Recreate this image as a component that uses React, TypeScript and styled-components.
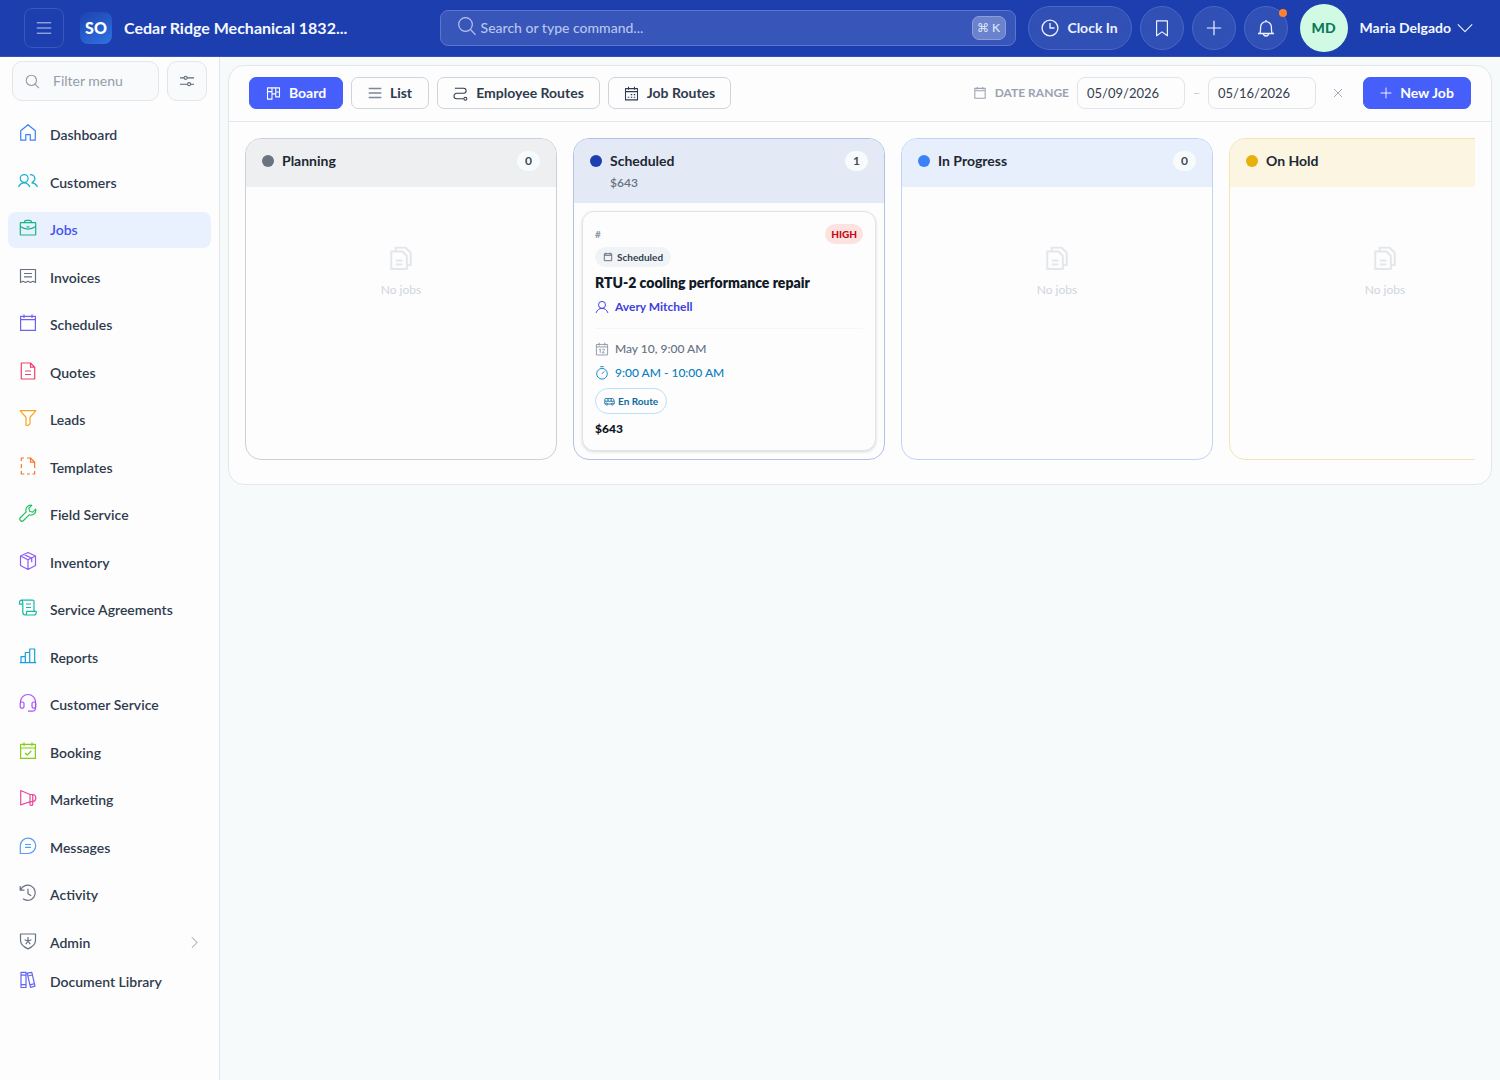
import React from "react";
import styled, { createGlobalStyle } from "styled-components";

const GlobalStyle = createGlobalStyle`
  *, *::before, *::after { box-sizing: border-box; }
  body {
    margin: 0;
    background: #f7fafb;
    color: #2f3b4c;
    font-family: "Lato", "Open Sans", sans-serif;
    font-size: 14px;
    line-height: 20px;
  }
  button, input { font: inherit; color: inherit; }
  button { cursor: pointer; }
  a { color: inherit; text-decoration: none; }
  ul { list-style: none; margin: 0; padding: 0; }
  h1, h2, h3, p { margin: 0; font-size: inherit; font-weight: inherit; }
`;

/* ---------- icons, drawn on a 20 x 20 grid ---------- */

const shapes = {
  menu: <path d="M1 3.5h18M1 10h18M1 16.5h18" />,
  search: (
    <>
      <circle cx="8.5" cy="8.5" r="6.8" />
      <path d="m13.5 13.5 5 5.3" />
    </>
  ),
  sliders: (
    <>
      <path d="M0 5.500h6M10 5.500h10M0 14.500h11M15 14.500h5" />
      <circle cx="8" cy="5.500" r="2.200" />
      <circle cx="13" cy="14.500" r="2.200" />
    </>
  ),
  clock: (
    <>
      <circle cx="10" cy="10" r="8.8" />
      <path d="M10 4.500V10h5" />
    </>
  ),
  bookmark: <path d="M4 2h12v16.500l-6-4.200-6 4.200z" />,
  plus: <path d="M10 1v18M1 10h18" />,
  bell: (
    <path d="M2 15.500h16M3.800 15.500c.8-1.500 .8-3 .8-6.500a5.400 5.400 0 0 1 10.800 0c0 3.500 0 5 .8 6.500M7.500 15.500a2.500 2.500 0 0 0 5 0M10 3.600V2" />
  ),
  chevronDown: <path d="m1 5.500 9 9 9-9" />,
  chevronRight: <path d="m6 2 8 8-8 8" />,
  close: <path d="m2 2 16 16M18 2 2 18" />,
  home: <path d="M2.700 7.800 10 1.700l7.300 6.100v9.400h-5v-5.500H7.800v5.500H2.700z" />,
  people: (
    <>
      <circle cx="6.200" cy="7.500" r="3.900" />
      <path d="M.5 16c1.300-2.800 3.200-4.200 5.700-4.200s4.400 1.400 5.700 4.200M12 3.800a3.900 3.900 0 1 1 1.800 7.600M13.500 11.800c2.700 0 4.700 1.400 6 4.200" />
    </>
  ),
  briefcase: (
    <>
      <rect x="2.300" y="4.600" width="15.400" height="12.400" rx=".5" />
      <path d="M6.500 4.600c0-1.800.6-2.300 2-2.300h3c1.400 0 2 .5 2 2.300M2.300 8.500c4.800 3.200 10.600 3.200 15.400 0M8.600 8.800h2.800" />
    </>
  ),
  receipt: (
    <path d="M2.500 3.500h15v13l-2.500-1.200-2.500 1.200-2.500-1.200-2.500 1.200L5 15.300l-2.500 1.200zM6 7.500h8M6 10.800h8" />
  ),
  calendar: (
    <path d="M2.600 3.400h14.800v14H2.600zM2.600 6.700h14.800M6 1.500v3.600M14 1.500v3.600" />
  ),
  document: (
    <path d="M3.300 2h9.200l4.200 4.200V18H3.300zM12.500 2v4.200h4.200M7 10h6M7 13.500h6" />
  ),
  funnel: (
    <path d="M2.300 2.600h15.400c0 2-5.700 5-5.700 7.400v5.300c0 1.300-3.300 3-4 1.700V10C8 7.600 2.300 4.600 2.300 2.600z" />
  ),
  dashedDocument: (
    <>
      <path d="M6 2H3.300v3M3.300 8v4M3.300 15v3h3M9 18h3M14.500 18h2.200v-3M16.700 12V6.200L12.500 2H9" />
      <path d="M12.500 2v4.200h4.200" />
    </>
  ),
  wrench: (
    <path d="M13.800 2.300a4.900 4.900 0 0 0-5.600 6.500l-5.700 5.700a2.100 2.100 0 0 0 3 3l5.700-5.700a4.900 4.900 0 0 0 6.500-5.600l-3 3-3-.9-.9-3z" />
  ),
  box: (
    <path d="M10 1.500 17.500 5v9.500L10 18.500l-7.500-4V5zM2.500 5 10 8.800 17.500 5M10 8.800v9.700M6 3.400l7.700 3.800v4" />
  ),
  scroll: (
    <path d="M4.800 6.200H1.500V4.500c0-1.600 1-2.300 2-2.300h11.300c.8 0 1.200.5 1.200 1.200v9.800M4.800 6.200V14c0 2 .8 3 2.500 3h8.500c1.500 0 2.400-.9 2.400-2.200v-1.500H8.700c0 2.300-.2 3.700-1.700 3.700M4.800 6.200c0-2.600-.3-4-1.500-4M8 6h5M8 9.500h5" />
  ),
  bars: (
    <path d="M1.800 16.700h16.400M3 16.700v-6h4.300v6M7.300 16.700V6.500h4.400v10.200M11.700 16.700V3h5v13.700" />
  ),
  headset: (
    <>
      <path d="M2.500 10.500V9a7.500 7.500 0 0 1 15 0v6c0 2-1 3.200-3.200 3.200H10" />
      <rect x="2.200" y="9" width="3.800" height="6.200" rx="1.600" />
      <rect x="14" y="9" width="3.800" height="6.200" rx="1.600" />
    </>
  ),
  calendarCheck: (
    <path d="M2.600 3.400h14.800v14H2.600zM2.600 7h14.800M6 1.500v3.600M14 1.500v3.600M7 12l2.300 2 4-4" />
  ),
  megaphone: (
    <path d="M2.700 2.500 12 6.500h3a3.700 3.700 0 0 1 0 7.200h-3l-9.300 3.200zM12 6.500v10.200c0 1 2.700 1 2.700 0V6.500" />
  ),
  message: (
    <path d="M2.300 17.500V10A7.700 7.700 0 1 1 10 17.500zM7 8.500h6M7 11.300h6" />
  ),
  history: (
    <path d="M2.600 6.800a7.600 7.600 0 1 1 2.400 9M2.200 3v4.200h4.200M10 5.700v5l3.200 2" />
  ),
  shield: (
    <path d="M2.500 3c5 0 10 0 15 0v6.500c0 4-3 6.300-7.500 8.400-4.500-2.100-7.500-4.400-7.500-8.400zM10 6v4M6.600 8.800 10 10l3.400-1.200M10 10l-2.200 3.200M10 10l2.200 3.200" />
  ),
  books: (
    <path d="M3 2.300h5v15.200H3zM3 5.200h5M3 14.600h5M9.200 3.200 13.800 2.300 17 16.200l-4.500 1.200zM9.900 6l4.600-1M12 14.800l4.600-1.200" />
  ),
  board: (
    <path d="M2 2.500h16v12h-5v-4H8v7H2zM8 2.500v8M13 2.500v8M2 7.500h6M13 8h5" />
  ),
  route: (
    <>
      <path d="M2.500 3h11.700a3.300 3.300 0 0 1 0 6.600H5a3.700 3.700 0 0 0 0 7.400h9" />
      <circle cx="16.500" cy="17" r="2" />
    </>
  ),
  calendarDots: (
    <>
      <path d="M2 3.500h16v15H2zM2 7.500h16M6 1v4M14 1v4" />
      <path d="M9 11.500h2M13 11.500h2M5 15h2M9 15h2M13 15h2" />
    </>
  ),
  calendarDate: (
    <>
      <path d="M2 3.500h16v15H2zM2 7h16M6 1v4M14 1v4" />
      <path d="m6 10.800 1.500-.8v5.500M10.500 11c.8-1.500 3.300-1.200 3 .5-.2 1.200-3 2.500-3 4h3.300" />
    </>
  ),
  person: (
    <>
      <circle cx="10" cy="7" r="5" />
      <path d="M1.500 18.500c1.700-4.500 4.500-6.500 8.500-6.500s6.800 2 8.500 6.500" />
    </>
  ),
  stopwatch: (
    <path d="M10 3.500a7.600 7.600 0 1 0 0 15.200 7.600 7.600 0 1 0 0-15.200zM7.500 1h5M10 11.300l3.300-3.600" />
  ),
  van: (
    <>
      <path d="M3 14.500H1.500V6c0-.8.5-1.300 1.300-1.300h13c1.500 0 2.700 3 2.700 5.300v4.500H17M7 14.500h6M1.500 9.500h17M7.300 4.700v4.800M13 4.700v4.800" />
      <circle cx="5" cy="14.800" r="1.800" />
      <circle cx="15" cy="14.800" r="1.800" />
    </>
  ),
  documents: (
    <path d="M2.500 5h8.700l3.300 3.500V18.500H2.500zM6 5V2h7.500L17.500 6v9.500h-3M6 12h5M6 15h5" />
  ),
};

type IconName = keyof typeof shapes;

const Svg = styled.svg<{ $size: number; $color?: string }>`
  flex: none;
  width: ${(p) => p.$size}px;
  height: ${(p) => p.$size}px;
  color: ${(p) => p.$color || "inherit"};
  fill: none;
  stroke: currentColor;
  stroke-linejoin: round;
`;

function Icon({ name, size = 20, color, weight = 1.2 }: { name: IconName; size?: number; color?: string; weight?: number }) {
  return (
    <Svg $size={size} $color={color} viewBox="0 0 20 20" strokeWidth={weight} aria-hidden="true">
      {shapes[name]}
    </Svg>
  );
}

const RaisedIcon = styled.span`
  display: flex;
  padding-bottom: 4px;
`;

/* ---------- header ---------- */

const Header = styled.header`
  display: flex;
  align-items: center;
  justify-content: space-between;
  height: 57px;
  padding: 0 24px;
  background: #1c3eae;
  border-bottom: 1px solid #3553b5;
  color: #f4f7ff;
`;

const Brand = styled.div`
  display: flex;
  align-items: center;
  flex: 1;
`;

const MenuButton = styled.button`
  display: grid;
  place-items: center;
  width: 40px;
  height: 40px;
  margin-right: 16px;
  border: 1px solid #3a58bb;
  border-radius: 8px;
  background: transparent;
  color: #c5d1f4;
`;

const Logo = styled.span`
  display: grid;
  place-items: center;
  width: 32px;
  height: 32px;
  margin-right: 12px;
  border-radius: 8px;
  background: linear-gradient(150deg, #1d43b0, #2f72e2);
  color: #fff;
  font-size: 16px;
  font-weight: 900;
`;

const Company = styled.h1`
  font-size: 16px;
  font-weight: 700;
  white-space: nowrap;
`;

const SearchBox = styled.label`
  display: flex;
  align-items: center;
  gap: 4px;
  width: 576px;
  height: 36px;
  padding: 0 9px 0 16px;
  border: 1px solid #5a75ca;
  border-radius: 8px;
  background: #3855b9;
  color: #b7c5ee;
`;

const SearchInput = styled.input`
  flex: 1;
  min-width: 0;
  padding: 0;
  border: 0;
  outline: 0;
  background: transparent;
  font-size: 14px;
  font-weight: 500;
  &::placeholder { color: #b7c5ee; opacity: 1; }
`;

const Kbd = styled.kbd`
  display: flex;
  align-items: center;
  justify-content: center;
  width: 34px;
  height: 24px;
  border: 1px solid #8b9ddb;
  border-radius: 7px;
  background: #6b82cc;
  color: #e0e7fb;
  font: 500 12px/16px "Lato", "DejaVu Sans", sans-serif;
`;

const HeaderActions = styled.div`
  display: flex;
  align-items: center;
  gap: 8px;
  margin-left: 12px;
`;

const RoundButton = styled.button`
  position: relative;
  display: flex;
  align-items: center;
  justify-content: center;
  gap: 8px;
  width: 44px;
  height: 44px;
  padding: 0;
  border: 1px solid #4a67c2;
  border-radius: 22px;
  background: #3050b6;
  color: #eef2ff;
  font-weight: 700;
`;

const ClockButton = styled(RoundButton)`
  width: 104px;
`;

const AlertDot = styled.span`
  position: absolute;
  top: 2px;
  right: 0;
  width: 8px;
  height: 8px;
  border-radius: 50%;
  background: #fb8133;
`;

const UserButton = styled.button`
  display: flex;
  align-items: center;
  padding: 0 3px 0 0;
  margin-left: 4px;
  border: 0;
  background: transparent;
  font-weight: 700;
  white-space: nowrap;
`;

const Avatar = styled.span`
  display: grid;
  place-items: center;
  width: 48px;
  height: 48px;
  margin-right: 12px;
  border-radius: 50%;
  background: #d1fae5;
  color: #087a59;
  font-size: 14px;
  font-weight: 900;
`;

const UserName = styled.span`
  margin-right: 6px;
`;

/* ---------- sidebar ---------- */

const Shell = styled.div`
  display: flex;
  align-items: stretch;
  min-height: calc(100vh - 57px);
`;

const Sidebar = styled.nav`
  flex: none;
  width: 220px;
  padding: 4px 8px;
  background: #fdfdfe;
  border-right: 1px solid #e1e6eb;
`;

const FilterRow = styled.div`
  display: flex;
  gap: 8px;
  padding: 0 4px;
  margin-bottom: 16px;
`;

const FilterBox = styled.label`
  display: flex;
  align-items: center;
  gap: 13px;
  flex: 1;
  min-width: 0;
  height: 40px;
  padding: 0 12px;
  border: 1px solid #e1e6eb;
  border-radius: 10px;
  background: #f8fafb;
  color: #949dab;
`;

const FilterInput = styled.input`
  width: 100%;
  min-width: 0;
  padding: 0;
  border: 0;
  outline: 0;
  background: transparent;
  font-size: 14px;
  &::placeholder { color: #949dab; opacity: 1; }
`;

const FilterButton = styled.button`
  display: grid;
  place-items: center;
  flex: none;
  width: 40px;
  height: 40px;
  border: 1px solid #e1e6eb;
  border-radius: 10px;
  background: #f8fafb;
  color: #5d6877;
`;

const NavList = styled.ul`
  display: flex;
  flex-direction: column;
  justify-content: space-between;
  min-height: 844px;
  margin-bottom: 3px;
`;

const NavLink = styled.a<{ $active?: boolean }>`
  display: flex;
  align-items: center;
  gap: 12px;
  height: 36px;
  padding: 0 10px;
  border-radius: 8px;
  background: ${(p) => (p.$active ? "#e9f1fe" : "transparent")};
  color: ${(p) => (p.$active ? "#4453f3" : "#2f3b4c")};
  font-weight: 600;
`;

const NavLabel = styled.span`
  flex: 1;
`;

/* ---------- board ---------- */

const Main = styled.main`
  flex: 1;
  min-width: 0;
  padding: 8px;
`;

const Panel = styled.section`
  border: 1px solid #e2e7ec;
  border-radius: 16px;
  background: #fdfdfe;
`;

const Toolbar = styled.div`
  display: flex;
  align-items: center;
  justify-content: space-between;
  height: 56px;
  padding: 0 20px 1px;
  border-bottom: 1px solid #e2e7ec;
`;

const Group = styled.div`
  display: flex;
  align-items: center;
  gap: 8px;
`;

const ToolButton = styled.button<{ $primary?: boolean; $width: number }>`
  display: flex;
  align-items: center;
  justify-content: center;
  gap: 8px;
  width: ${(p) => p.$width}px;
  height: 32px;
  padding: 0;
  border: 1px solid ${(p) => (p.$primary ? "#465ffb" : "#cfd4dc")};
  border-radius: 7px;
  background: ${(p) => (p.$primary ? "#465ffb" : "#fdfdfe")};
  color: ${(p) => (p.$primary ? "#fff" : "#2f3b4c")};
  font-weight: 700;
  white-space: nowrap;
`;

const RangeLabel = styled.span`
  display: flex;
  align-items: center;
  gap: 8px;
  color: #9aa3b1;
  font-size: 12px;
  font-weight: 700;
  white-space: nowrap;
`;

const DateInput = styled.input`
  width: 108px;
  height: 32px;
  padding: 0 9px;
  border: 1px solid #e1e4e9;
  border-radius: 8px;
  background: #fdfdfe;
  color: #333e4e;
  font-size: 13px;
`;

const Dash = styled.span`
  color: #bfc5ce;
  font-size: 12px;
`;

const ClearButton = styled.button`
  display: grid;
  place-items: center;
  width: 28px;
  height: 28px;
  margin-right: 3px;
  padding: 0;
  border: 0;
  background: transparent;
  color: #9aa3b1;
`;

const BoardScroller = styled.div`
  display: flex;
  gap: 16px;
  margin: 16px 16px 24px;
  overflow: hidden;
`;

const Column = styled.section<{ $line: string }>`
  display: flex;
  flex-direction: column;
  flex: none;
  width: 312px;
  border: 1px solid ${(p) => p.$line};
  border-radius: 16px;
  overflow: hidden;
`;

const ColumnHead = styled.header<{ $tint: string }>`
  padding: 12px 16px;
  background: ${(p) => p.$tint};
`;

const ColumnTitleRow = styled.div`
  display: flex;
  align-items: center;
  gap: 8px;
  height: 20px;
  margin: 0 0 4px;
`;

const Dot = styled.span<{ $color: string }>`
  width: 12px;
  height: 12px;
  border-radius: 50%;
  background: ${(p) => p.$color};
`;

const ColumnTitle = styled.h2`
  flex: 1;
  color: #1d2733;
  font-weight: 700;
`;

const Count = styled.span`
  min-width: 20px;
  padding: 0 8px;
  border-radius: 10px;
  background: #f8fbfc;
  color: #414c5b;
  font-size: 12px;
  font-weight: 700;
`;

const Total = styled.p`
  padding-left: 20px;
  color: #667182;
  font-size: 12px;
  font-weight: 600;
  line-height: 16px;
`;

const Empty = styled.div`
  display: flex;
  flex-direction: column;
  align-items: center;
  gap: 9px;
  padding-top: 58px;
  color: #e3e6ea;
  font-size: 12px;
`;

const EmptyText = styled.p`
  color: #d0d5dc;
`;

const Card = styled.article`
  margin: 8px;
  padding: 12px;
  border: 1px solid #e0e4e9;
  border-radius: 12px;
  background: #fdfdfe;
  box-shadow: 0 1px 3px rgba(16, 24, 40, 0.16);
`;

const CardTop = styled.div`
  display: flex;
  align-items: center;
  justify-content: space-between;
  color: #8a94a4;
  font-size: 10px;
  font-weight: 700;
`;

const Priority = styled.span`
  padding: 0 6px;
  border-radius: 10px;
  background: #fde2e2;
  color: #c40a14;
  font-weight: 900;
  line-height: 20px;
`;

const Status = styled.span`
  display: inline-flex;
  align-items: center;
  gap: 4px;
  height: 20px;
  margin-top: 3px;
  padding: 0 8px;
  border-radius: 10px;
  background: #f1f4f7;
  color: #333e4e;
  font-size: 10px;
  font-weight: 700;
`;

const JobTitle = styled.h3`
  margin-top: 6px;
  color: #111a26;
  font-size: 14px;
  font-weight: 800;
`;

const Line = styled.p<{ $color: string; $strong?: boolean }>`
  display: flex;
  align-items: center;
  gap: 6px;
  margin-top: 4px;
  color: ${(p) => p.$color};
  font-size: 12px;
  font-weight: ${(p) => (p.$strong ? 700 : 500)};
`;

const Details = styled.div`
  margin-top: 11px;
  padding-top: 6px;
  border-top: 1px solid #f4f6f8;
`;

const EnRoute = styled.span`
  display: inline-flex;
  align-items: center;
  gap: 3px;
  height: 26px;
  margin-top: 5px;
  padding: 0 8px;
  border: 1px solid #b9e2f8;
  border-radius: 13px;
  color: #0c6a9e;
  font-size: 10px;
  font-weight: 700;
`;

const Amount = styled.p`
  margin-top: 6px;
  color: #0c131d;
  font-size: 12px;
  font-weight: 900;
  line-height: 18px;
`;

const Block = styled.div`
  display: flex;
`;

const navItems: { label: string; icon: IconName; color: string; active?: boolean; nested?: boolean }[] = [
  { label: "Dashboard", icon: "home", color: "#3b82f6" },
  { label: "Customers", icon: "people", color: "#14b0cf" },
  { label: "Jobs", icon: "briefcase", color: "#17b583", active: true },
  { label: "Invoices", icon: "receipt", color: "#667182" },
  { label: "Schedules", icon: "calendar", color: "#6b63f0" },
  { label: "Quotes", icon: "document", color: "#f0416a" },
  { label: "Leads", icon: "funnel", color: "#f3a61c" },
  { label: "Templates", icon: "dashedDocument", color: "#f4792b" },
  { label: "Field Service", icon: "wrench", color: "#25c062" },
  { label: "Inventory", icon: "box", color: "#8b5cf6" },
  { label: "Service Agreements", icon: "scroll", color: "#18b8a4" },
  { label: "Reports", icon: "bars", color: "#169fdc" },
  { label: "Customer Service", icon: "headset", color: "#a855f7" },
  { label: "Booking", icon: "calendarCheck", color: "#84cc16" },
  { label: "Marketing", icon: "megaphone", color: "#ea4898" },
  { label: "Messages", icon: "message", color: "#5a9bf6" },
  { label: "Activity", icon: "history", color: "#667182" },
  { label: "Admin", icon: "shield", color: "#667182", nested: true },
];

function NavItem({ item }: { item: (typeof navItems)[number] }) {
  return (
    <NavLink href="#" $active={item.active}>
      <RaisedIcon>
        <Icon name={item.icon} color={item.color} />
      </RaisedIcon>
      <NavLabel>{item.label}</NavLabel>
      {item.nested && <Icon name="chevronRight" size={13} color="#8a94a4" weight={1.5} />}
    </NavLink>
  );
}

type BoardColumn = { title: string; count?: number; dot: string; tint: string; line: string; total?: string };

const columns: BoardColumn[] = [
  { title: "Planning", count: 0, dot: "#6b7280", tint: "#eeeff1", line: "#cdd0d6" },
  { title: "Scheduled", count: 1, dot: "#1c3eae", tint: "#e4eaf5", line: "#b5c1e4", total: "$643" },
  { title: "In Progress", count: 0, dot: "#3b82f6", tint: "#e8effc", line: "#c0d4f8" },
  { title: "On Hold", dot: "#e6b10b", tint: "#fbf5e2", line: "#f3e5ad" },
];

function JobCard() {
  return (
    <Card>
      <CardTop>
        <span>#</span>
        <Priority>HIGH</Priority>
      </CardTop>
      <Block>
        <Status>
          <Icon name="calendar" size={10} color="#5d6877" weight={1.8} />
          Scheduled
        </Status>
      </Block>
      <JobTitle>RTU-2 cooling performance repair</JobTitle>
      <Line $color="#3d3fe0" $strong>
        <Icon name="person" size={14} weight={1.4} />
        Avery Mitchell
      </Line>
      <Details>
        <Line $color="#667182">
          <Icon name="calendarDate" size={14} color="#8a94a4" weight={1.3} />
          May 10, 9:00 AM
        </Line>
        <Line $color="#0b7fc0">
          <Icon name="stopwatch" size={14} weight={1.3} />
          9:00 AM - 10:00 AM
        </Line>
        <Block>
          <EnRoute>
            <Icon name="van" size={11} weight={1.6} />
            En Route
          </EnRoute>
        </Block>
        <Amount>$643</Amount>
      </Details>
    </Card>
  );
}

export default function App() {
  return (
    <>
      <GlobalStyle />
      <Header>
        <Brand>
          <MenuButton aria-label="Toggle menu">
            <Icon name="menu" size={16} />
          </MenuButton>
          <Logo>SO</Logo>
          <Company>Cedar Ridge Mechanical 1832...</Company>
        </Brand>
        <SearchBox>
          <RaisedIcon>
            <Icon name="search" size={20} />
          </RaisedIcon>
          <SearchInput placeholder="Search or type command..." aria-label="Search or type command" />
          <Kbd>⌘ K</Kbd>
        </SearchBox>
        <HeaderActions>
          <ClockButton>
            <Icon name="clock" size={18} weight={1.5} />
            Clock In
          </ClockButton>
          <RoundButton aria-label="Bookmarks">
            <Icon name="bookmark" size={18} weight={1.3} />
          </RoundButton>
          <RoundButton aria-label="Create">
            <Icon name="plus" size={16} weight={1.5} />
          </RoundButton>
          <RoundButton aria-label="Notifications">
            <Icon name="bell" size={20} weight={1.3} />
            <AlertDot />
          </RoundButton>
          <UserButton>
            <Avatar>MD</Avatar>
            <UserName>Maria Delgado</UserName>
            <Icon name="chevronDown" size={16} weight={1.3} />
          </UserButton>
        </HeaderActions>
      </Header>
      <Shell>
        <Sidebar aria-label="Main">
          <FilterRow>
            <FilterBox>
              <Icon name="search" size={15} weight={1.5} />
              <FilterInput placeholder="Filter menu" aria-label="Filter menu" />
            </FilterBox>
            <FilterButton aria-label="Menu options">
              <Icon name="sliders" size={14} weight={1.5} />
            </FilterButton>
          </FilterRow>
          <NavList>
            {navItems.map((item) => (
              <li key={item.label}>
                <NavItem item={item} />
              </li>
            ))}
          </NavList>
          <NavItem item={{ label: "Document Library", icon: "books", color: "#6366f1" }} />
        </Sidebar>
        <Main>
          <Panel>
            <Toolbar>
              <Group>
                <ToolButton $primary $width={94}>
                  <Icon name="board" size={15} weight={1.4} />
                  Board
                </ToolButton>
                <ToolButton $width={78}>
                  <Icon name="menu" size={14} color="#7d8795" weight={2} />
                  List
                </ToolButton>
                <ToolButton $width={163}>
                  <Icon name="route" size={15} weight={1.4} />
                  Employee Routes
                </ToolButton>
                <ToolButton $width={123}>
                  <Icon name="calendarDots" size={15} weight={1.4} />
                  Job Routes
                </ToolButton>
              </Group>
              <Group>
                <RangeLabel>
                  <Icon name="calendar" size={14} weight={1.5} />
                  DATE RANGE
                </RangeLabel>
                <DateInput defaultValue="05/09/2026" aria-label="From date" />
                <Dash>–</Dash>
                <DateInput defaultValue="05/16/2026" aria-label="To date" />
                <ClearButton aria-label="Clear dates">
                  <Icon name="close" size={10} weight={1.8} />
                </ClearButton>
                <ToolButton $primary $width={108}>
                  <Icon name="plus" size={12} weight={1.5} />
                  New Job
                </ToolButton>
              </Group>
            </Toolbar>
            <BoardScroller>
              {columns.map((c) => (
                <Column key={c.title} $line={c.line}>
                  <ColumnHead $tint={c.tint}>
                    <ColumnTitleRow>
                      <Dot $color={c.dot} />
                      <ColumnTitle>{c.title}</ColumnTitle>
                      {c.count !== undefined && <Count>{c.count}</Count>}
                    </ColumnTitleRow>
                    {c.total && <Total>{c.total}</Total>}
                  </ColumnHead>
                  {c.count ? (
                    <JobCard />
                  ) : (
                    <Empty>
                      <Icon name="documents" size={26} weight={1.5} />
                      <EmptyText>No jobs</EmptyText>
                    </Empty>
                  )}
                </Column>
              ))}
            </BoardScroller>
          </Panel>
        </Main>
      </Shell>
    </>
  );
}
